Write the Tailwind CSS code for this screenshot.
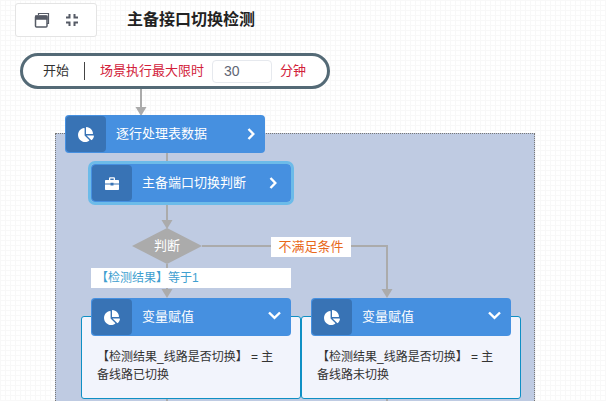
<!DOCTYPE html>
<html lang="zh-CN">

<head>
    <meta charset="UTF-8">
    <title>主备接口切换检测</title>
    <script src="https://cdn.jsdelivr.net/npm/@tailwindcss/browser@4"></script>
</head>

<body class="w-[606px] h-[401px] overflow-hidden bg-white bg-[linear-gradient(#f8f8f8_1px,transparent_1px),linear-gradient(90deg,#f8f8f8_1px,transparent_1px)] bg-[size:5px_5px] font-['Liberation_Sans','Noto_Sans_CJK_SC',sans-serif]">

    <!-- Toolbar -->
    <header class="flex items-center h-[34px] mt-[3px] ml-[15px]">
        <div class="flex items-center gap-[15px] w-[82px] h-[34px] pl-[18px] bg-white border border-[#e4e4e4] rounded-[3px]">
            <svg class="w-[16px] h-[16px]" viewBox="0 0 16 16" fill="none" stroke="#565b66">
                <path d="M4.5 3V1.5H14.5V11.5H13" stroke-width="1.2"/>
                <rect x="1.5" y="4" width="11.5" height="11" rx="1" stroke-width="1.5"/>
                <rect x="1.5" y="4" width="11.5" height="3.2" fill="#565b66" stroke-width="1"/>
            </svg>
            <svg class="w-[14px] h-[14px]" viewBox="0 0 14 14" fill="none" stroke="#565b66" stroke-width="2">
                <path d="M1 4.5H4.5V1M9.5 1V4.5H13M13 9.5H9.5V13M4.5 13V9.5H1"/>
            </svg>
        </div>
        <h1 class="ml-[30px] text-[16px] font-bold text-[#222]">主备接口切换检测</h1>
    </header>

    <!-- Start -->
    <div class="flex items-center w-[310px] h-[36px] mt-[16px] ml-[20px] pl-[20px] bg-white border-[3px] border-[#546a76] rounded-full text-[13px]">
        <span class="text-[#333]">开始</span>
        <span class="w-px h-[18px] mx-[15px] bg-[#444]"></span>
        <span class="text-[#d2213a]">场景执行最大限时</span>
        <span class="flex items-center w-[60px] h-[23px] ml-[8px] pl-[11px] bg-white border border-[#e6e9ee] rounded-[4px] text-[14px] text-[#5f6674]">30</span>
        <span class="ml-[8px] text-[#d2213a]">分钟</span>
    </div>

    <!-- Flow diagram -->
    <div class="absolute inset-0 overflow-hidden pointer-events-none">
        <div class="absolute left-[55px] top-[133px] w-[480px] h-[300px] bg-[#bfcbe2] border border-dotted border-[#777]"></div>

        <!-- Connectors -->
        <svg class="absolute left-0 top-0" width="606" height="401" fill="none" stroke="#ababab" stroke-width="2">
            <path d="M141 89V108"/>
            <path d="M141 116L135.500 107H146.500Z" fill="#ababab" stroke="none"/>
            <path d="M167 153V164"/>
            <path d="M167 202V222"/>
            <path d="M167 229L161.500 220H172.500Z" fill="#ababab" stroke="none"/>
            <path d="M167 264V290"/>
            <path d="M167 298L161.500 289H172.500Z" fill="#ababab" stroke="none"/>
            <path d="M202 246H387V291"/>
            <path d="M387 298L381.500 289H392.500Z" fill="#ababab" stroke="none"/>
            <path d="M167 399V401M387 399V401"/>
            <path d="M167 228L202 246L167 264L132 246Z" fill="#ababab" stroke="none"/>
        </svg>

        <div class="absolute left-[132px] top-[228px] w-[70px] h-[36px] flex items-center justify-center text-[13px] text-white">判断</div>
        <div class="absolute left-[271px] top-[237px] w-[80px] h-[20px] flex items-center justify-center bg-white text-[13px] text-[#e8691c]">不满足条件</div>
        <div class="absolute left-[91px] top-[268px] w-[200px] h-[20px] pl-[5px] flex items-center bg-white text-[12px] text-[#3f9fd0]">【检测结果】等于1</div>

        <!-- Assignment cards -->
        <div class="absolute left-[81px] top-[316px] w-[220px] h-[83px] pt-[31px] pl-[15px] pr-[16px] bg-[#f2f4fc] border border-[#0f8fc4] rounded-[3px] text-[12px] leading-[18px] text-[#333]">【检测结果_线路是否切换】 = 主备线路已切换</div>
        <div class="absolute left-[301px] top-[316px] w-[220px] h-[83px] pt-[31px] pl-[15px] pr-[16px] bg-[#f2f4fc] border border-[#0f8fc4] rounded-[3px] text-[12px] leading-[18px] text-[#333]">【检测结果_线路是否切换】 = 主备线路未切换</div>

        <!-- Node: loop -->
        <div class="absolute left-[65px] top-[115px] flex items-center w-[200px] h-[38px] pl-px bg-[#4690e0] rounded-[4px]">
            <span class="flex items-center justify-center w-[40px] h-[36px] bg-[#3873b5] rounded-[4px]">
                <svg class="w-[16px] h-[15px]" viewBox="0 0 544 512" fill="#fff"><path d="M527.79 288H290.5l158.03 158.03c6.04 6.04 15.98 6.53 22.19.68 38.7-36.46 65.32-85.61 73.13-140.86 1.34-9.46-6.51-17.85-16.06-17.85zm-15.83-64.8C503.72 103.74 408.26 8.28 288.8.04 279.68-.59 272 7.1 272 16.24V240h223.77c9.14 0 16.82-7.68 16.19-16.8zM224 288V50.710c0-9.550-8.390-17.400-17.840-16.060C86.990 51.490-4.100 155.600.140 280.370 4.500 408.510 114.830 513.590 243.030 511.980c50.400-.630 96.970-16.870 135.260-44.030 7.900-5.600 8.420-17.230 1.570-24.080L224 288z"/></svg>
            </span>
            <span class="ml-[10px] text-[13px] text-white">逐行处理表数据</span>
            <svg class="ml-auto mr-[10px] w-[8px] h-[12px]" viewBox="0 0 8 12" fill="none" stroke="#fff" stroke-width="2.400"><path d="M1.500 1L6.300 6L1.500 11"/></svg>
        </div>

        <!-- Node: judge -->
        <div class="absolute left-[91px] top-[164px] flex items-center w-[200px] h-[38px] pl-px bg-[#4690e0] rounded-[4px] outline-[3px] outline-[#6cbbe9]">
            <span class="flex items-center justify-center w-[40px] h-[36px] bg-[#3873b5] rounded-[4px]">
                <svg class="w-[14px] h-[13px]" viewBox="0 0 14 13" fill="#fff"><path d="M4 3V1.500C4 .800 4.600.300 5.200.300H8.800C9.400.300 10 .800 10 1.500V3H13C13.600 3 14 3.400 14 4V6.500H8.500V5.800H5.500V6.500H0V4C0 3.400.400 3 1 3ZM5.300 3H8.700V1.600H5.300ZM0 7.600H5.500V8.600H8.500V7.600H14V12C14 12.600 13.600 13 13 13H1C.400 13 0 12.600 0 12Z"/></svg>
            </span>
            <span class="ml-[10px] text-[13px] text-white">主备端口切换判断</span>
            <svg class="ml-auto mr-[14px] w-[8px] h-[12px]" viewBox="0 0 8 12" fill="none" stroke="#fff" stroke-width="2.400"><path d="M1.500 1L6.300 6L1.500 11"/></svg>
        </div>

        <!-- Node: assign left -->
        <div class="absolute left-[91px] top-[298px] flex items-center w-[200px] h-[38px] pl-px bg-[#4690e0] rounded-[4px]">
            <span class="flex items-center justify-center w-[40px] h-[36px] bg-[#3873b5] rounded-[4px]">
                <svg class="w-[16px] h-[15px]" viewBox="0 0 544 512" fill="#fff"><path d="M527.79 288H290.5l158.03 158.03c6.04 6.04 15.98 6.53 22.19.68 38.7-36.46 65.32-85.61 73.13-140.86 1.34-9.46-6.51-17.85-16.06-17.85zm-15.83-64.8C503.72 103.74 408.26 8.28 288.8.04 279.68-.59 272 7.1 272 16.24V240h223.77c9.14 0 16.82-7.68 16.19-16.8zM224 288V50.710c0-9.550-8.390-17.400-17.840-16.060C86.990 51.490-4.100 155.600.140 280.370 4.500 408.510 114.830 513.590 243.030 511.980c50.400-.630 96.970-16.870 135.260-44.030 7.900-5.600 8.420-17.230 1.570-24.080L224 288z"/></svg>
            </span>
            <span class="ml-[10px] text-[13px] text-white">变量赋值</span>
            <svg class="ml-auto mr-[10px] w-[13px] h-[9px] -mt-[3px]" viewBox="0 0 13 9" fill="none" stroke="#fff" stroke-width="2.400"><path d="M1 1.500L6.500 6.800L12 1.500"/></svg>
        </div>

        <!-- Node: assign right -->
        <div class="absolute left-[311px] top-[298px] flex items-center w-[200px] h-[38px] pl-px bg-[#4690e0] rounded-[4px]">
            <span class="flex items-center justify-center w-[40px] h-[36px] bg-[#3873b5] rounded-[4px]">
                <svg class="w-[16px] h-[15px]" viewBox="0 0 544 512" fill="#fff"><path d="M527.79 288H290.5l158.03 158.03c6.04 6.04 15.98 6.53 22.19.68 38.7-36.46 65.32-85.61 73.13-140.86 1.34-9.46-6.51-17.85-16.06-17.85zm-15.83-64.8C503.72 103.74 408.26 8.28 288.8.04 279.68-.59 272 7.1 272 16.24V240h223.77c9.14 0 16.82-7.68 16.19-16.8zM224 288V50.710c0-9.550-8.390-17.400-17.840-16.060C86.990 51.490-4.100 155.600.140 280.370 4.500 408.510 114.830 513.590 243.030 511.980c50.400-.630 96.970-16.870 135.260-44.030 7.900-5.600 8.420-17.230 1.570-24.080L224 288z"/></svg>
            </span>
            <span class="ml-[10px] text-[13px] text-white">变量赋值</span>
            <svg class="ml-auto mr-[10px] w-[13px] h-[9px] -mt-[3px]" viewBox="0 0 13 9" fill="none" stroke="#fff" stroke-width="2.400"><path d="M1 1.500L6.500 6.800L12 1.500"/></svg>
        </div>
    </div>

</body>

</html>
